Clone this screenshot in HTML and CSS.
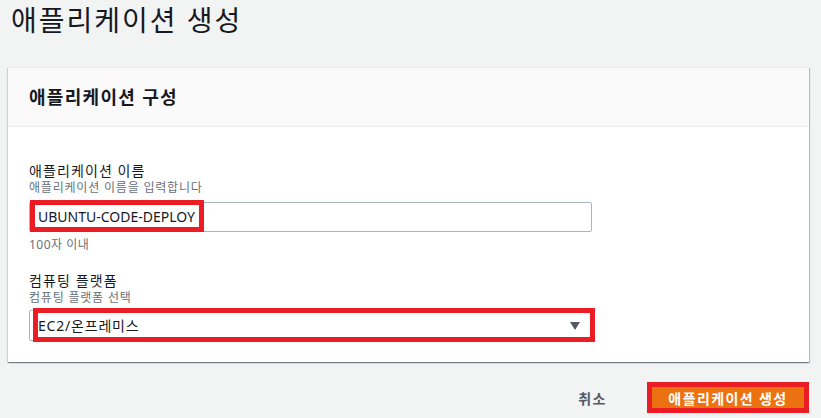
FILE: index.html
```html
<!DOCTYPE html>
<html lang="ko">
<head>
  <meta charset="UTF-8" />
  <meta name="viewport" content="width=device-width, initial-scale=1.0" />
  <title>애플리케이션 생성</title>
  <link rel="stylesheet" href="styles.css">
</head>
<body>
  <h1 class="page-title">애플리케이션 생성</h1>

  <div class="card">
    <div class="card-header">애플리케이션 구성</div>
    <div class="card-body">
      <div class="field">
        <div class="label">애플리케이션 이름</div>
        <div class="desc">애플리케이션 이름을 입력합니다</div>
        <div class="input">
          UBUNTU-CODE-DEPLOY
          <span class="mark mark-input"></span>
        </div>
        <div class="hint">100자 이내</div>
      </div>

      <div class="field field-next">
        <div class="label">컴퓨팅 플랫폼</div>
        <div class="desc">컴퓨팅 플랫폼 선택</div>
        <div class="input select">
          <span class="ko">EC2/온프레미스</span>
          <span class="caret"></span>
          <span class="mark mark-select"></span>
        </div>
      </div>
    </div>
  </div>

  <div class="actions">
    <span class="cancel">취소</span>
    <button class="primary">애플리케이션 생성</button>
  </div>
</body>
</html>
```

FILE: styles.css
```css
body {
  margin: 0;
  background: #f2f3f3;
  color: #16191f;
  font-family: "Noto Sans", "Noto Sans CJK KR", sans-serif;
}

.page-title {
  margin: 0;
  padding-left: 11px;
  font-size: 28px;
  font-weight: normal;
  line-height: 40px;
  letter-spacing: 2px;
}

.card {
  margin: 27px 12px 0 8px;
  background: #fff;
  box-shadow: 0 1px 1px 0 rgba(0, 28, 36, 0.35), 1px 1px 1px 0 rgba(0, 28, 36, 0.2), -1px 1px 1px 0 rgba(0, 28, 36, 0.1);
  border-top: 1px solid #eaeded;
}

.card-header {
  height: 58px;
  padding: 0 21px;
  background: #fafafa;
  border-bottom: 1px solid #eaeded;
  font-size: 18px;
  font-weight: bold;
  line-height: 58px;
  letter-spacing: 1.3px;
}

.card-body {
  padding: 34px 21px 21px;
}

.label {
  font-size: 14px;
  line-height: 20px;
  letter-spacing: 1.1px;
}

.desc {
  font-size: 12px;
  line-height: 14px;
  color: #687078;
  letter-spacing: 0.8px;
}

.input {
  position: relative;
  box-sizing: border-box;
  width: 563px;
  height: 30px;
  margin-top: 7px;
  padding: 0 8px;
  border: 1px solid #aab7b8;
  border-radius: 2px;
  font-size: 14px;
  line-height: 28px;
}

.ko {
  letter-spacing: 0.8px;
}

.hint {
  margin-top: 5px;
  font-size: 12px;
  line-height: 16px;
  color: #687078;
  letter-spacing: 0.5px;
}

.field-next {
  margin-top: 18px;
}

.select {
  display: flex;
  justify-content: space-between;
  align-items: center;
  height: 31px;
  margin-top: 5px;
}

.caret {
  width: 0;
  height: 0;
  margin-right: 3px;
  border-left: 5px solid transparent;
  border-right: 5px solid transparent;
  border-top: 8px solid #545b64;
}

/* red annotation boxes drawn over the fields */
.mark {
  position: absolute;
  box-sizing: border-box;
  border: 5px solid #ec1c24;
}

.mark-input {
  left: 0;
  top: -3px;
  width: 174px;
  height: 32px;
}

.mark-select {
  left: 3px;
  right: -4px;
  top: -3px;
  bottom: -2px;
}

.actions {
  display: flex;
  justify-content: flex-end;
  align-items: center;
  gap: 40px;
  margin: 20px 12px 0 0;
}

.cancel {
  font-size: 14px;
  font-weight: bold;
  color: #545b64;
  letter-spacing: 1.5px;
}

.primary {
  box-sizing: border-box;
  width: 162px;
  height: 31px;
  padding: 0;
  border: 5px solid #ec1c24;
  background: #ec7211;
  color: #fff;
  font-family: inherit;
  font-size: 14px;
  font-weight: bold;
  letter-spacing: 1.4px;
}
```
